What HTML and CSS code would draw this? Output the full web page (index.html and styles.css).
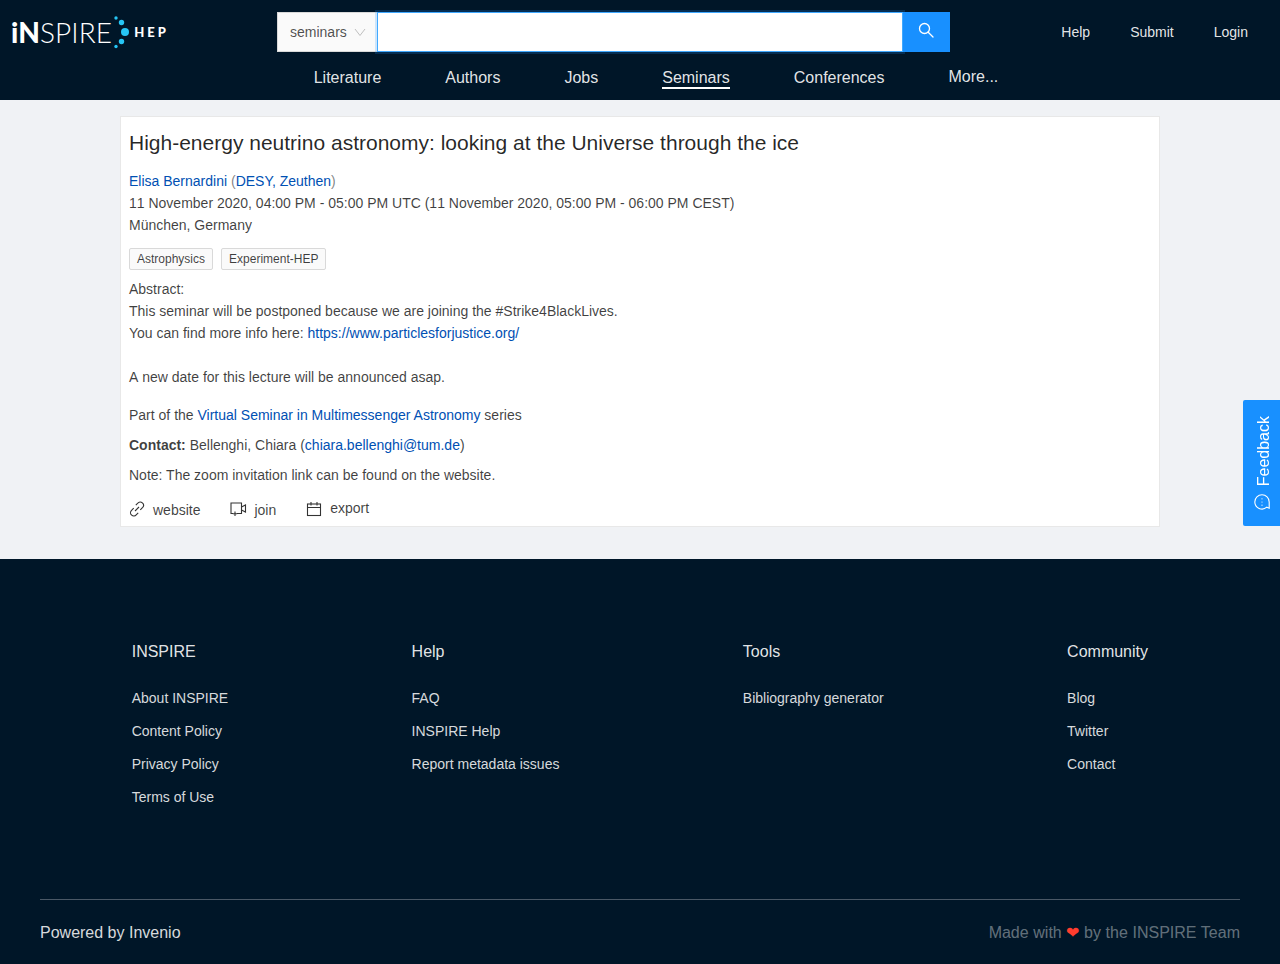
FILE: index.html
```html
<!DOCTYPE html>
<html lang="en">
<head>
    <meta charset="UTF-8">
    <title>High-energy neutrino astronomy - INSPIRE</title>
    <link rel="stylesheet" href="styles.css">
</head>
<body>
    <header class="header">
        <div class="header-top">
            <a class="logo" href="#">
                <span class="logo-name"><b>iN</b>SPIRE</span>
                <svg class="logo-dots" width="20" height="34" viewBox="0 0 20 34">
                    <circle cx="4" cy="3" r="1.700"/>
                    <circle cx="9.500" cy="7.500" r="2.700"/>
                    <circle cx="13" cy="17" r="4"/>
                    <circle cx="9.500" cy="26.500" r="2.700"/>
                    <circle cx="4" cy="31.500" r="1.700"/>
                </svg>
                <span class="logo-hep">HEP</span>
            </a>
            <form class="search">
                <div class="search-scope">
                    <span>seminars</span>
                    <svg width="12" height="12" viewBox="0 0 12 12"><path d="M1 3l5 6.500L11 3" fill="none" stroke="#bfbfbf" stroke-width="1"/></svg>
                </div>
                <div class="search-input"></div>
                <button class="search-btn" type="button">
                    <svg width="16" height="16" viewBox="0 0 16 16" fill="none" stroke="#fff" stroke-width="1.300">
                        <circle cx="6.500" cy="6.500" r="5"/>
                        <path d="M10.200 10.200L15 15" stroke-linecap="round"/>
                    </svg>
                </button>
            </form>
            <nav class="user-links">
                <a href="#">Help</a>
                <a href="#">Submit</a>
                <a href="#">Login</a>
            </nav>
        </div>
        <nav class="main-nav">
            <a href="#">Literature</a>
            <a href="#">Authors</a>
            <a href="#">Jobs</a>
            <a href="#" class="active">Seminars</a>
            <a href="#">Conferences</a>
            <a href="#" class="more">More...</a>
        </nav>
    </header>

    <main class="content">
        <article class="card">
            <h1 class="title">High-energy neutrino astronomy: looking at the Universe through the ice</h1>
            <div class="line"><a href="#">Elisa Bernardini</a> <span class="paren">(</span><a href="#">DESY, Zeuthen</a><span class="paren">)</span></div>
            <div class="line no-kern">11 November 2020, 04:00 PM - 05:00 PM UTC (11 November 2020, 05:00 PM - 06:00 PM CEST)</div>
            <div class="line">München, Germany</div>
            <div class="tags">
                <span class="tag">Astrophysics</span>
                <span class="tag">Experiment-HEP</span>
            </div>
            <div class="line">Abstract:</div>
            <div class="line">This seminar will be postponed because we are joining the #Strike4BlackLives.</div>
            <div class="line">You can find more info here: <a href="#">https://www.particlesforjustice.org/</a></div>
            <div class="line spaced no-kern">A new date for this lecture will be announced asap.</div>
            <div class="line part">Part of the <a href="#">Virtual Seminar in Multimessenger Astronomy</a> series</div>
            <div class="line block"><b>Contact:</b> Bellenghi, Chiara (<a href="#">chiara.bellenghi@tum.de</a>)</div>
            <div class="line block">Note: The zoom invitation link can be found on the website.</div>
            <div class="actions">
                <a class="action" href="#">
                    <svg width="16" height="16" viewBox="0 0 16 16" fill="none" stroke="#333" stroke-width="1.100">
                        <path d="M6.800 4.200l2-2a3.100 3.100 0 0 1 4.900 4.200l-2.400 2.400"/>
                        <path d="M9.200 11.800l-2 2a3.100 3.100 0 0 1-4.900-4.200l2.400-2.400"/>
                        <path d="M6 10l4-4"/>
                    </svg>
                    <span class="low">website</span>
                </a>
                <a class="action join" href="#">
                    <svg width="17" height="16" viewBox="0 0 17 16" fill="none" stroke="#333" stroke-width="1.100">
                        <path d="M3 12.500H1V2h10.500v10.500H7"/>
                        <path d="M11.500 6l4-2v7l-4-2"/>
                        <path d="M5 10.500v4.500M2.800 12.800h4.400"/>
                    </svg>
                    <span class="low">join</span>
                </a>
                <a class="action" href="#">
                    <svg width="16" height="16" viewBox="0 0 16 16" fill="none" stroke="#333" stroke-width="1.100">
                        <rect x="1.500" y="3" width="13" height="11.500"/>
                        <path d="M1.500 6.500h13M5 1v3.500M11 1v3.500"/>
                    </svg>
                    <span class="high">export</span>
                </a>
            </div>
        </article>
    </main>

    <a class="feedback" href="#">
        <svg width="16" height="16" viewBox="0 0 16 16" fill="none" stroke="#fff" stroke-width="1.100">
            <path d="M8 .8a7.200 7.200 0 1 1 0 14.400H1.800l1-2.400A7.200 7.200 0 0 1 8 .8z" transform="rotate(-90 8 8)"/>
            <circle cx="8" cy="4.800" r=".6" fill="#fff" stroke="none"/>
            <circle cx="8" cy="8" r=".6" fill="#fff" stroke="none"/>
            <circle cx="8" cy="11.200" r=".6" fill="#fff" stroke="none"/>
        </svg>
        <span>Feedback</span>
    </a>

    <footer class="footer">
        <div class="footer-cols">
            <div class="footer-col">
                <h4>INSPIRE</h4>
                <a href="#">About INSPIRE</a>
                <a href="#">Content Policy</a>
                <a href="#">Privacy Policy</a>
                <a href="#">Terms of Use</a>
            </div>
            <div class="footer-col">
                <h4>Help</h4>
                <a href="#">FAQ</a>
                <a href="#">INSPIRE Help</a>
                <a href="#">Report metadata issues</a>
            </div>
            <div class="footer-col">
                <h4>Tools</h4>
                <a href="#">Bibliography generator</a>
            </div>
            <div class="footer-col">
                <h4>Community</h4>
                <a href="#">Blog</a>
                <a href="#">Twitter</a>
                <a href="#">Contact</a>
            </div>
        </div>
        <div class="footer-bottom">
            <span class="powered">Powered by Invenio</span>
            <span class="made">Made with <span class="heart">❤</span> by the INSPIRE Team</span>
        </div>
    </footer>
</body>
</html>
```

FILE: styles.css
```css
* {
    box-sizing: border-box;
}

body {
    margin: 0;
    background-color: #f0f2f5;
    font-family: "Liberation Sans", Arial, sans-serif;
    font-size: 14px;
    font-variant: tabular-nums;
    font-feature-settings: "tnum";
    line-height: 22px;
    color: rgba(0, 0, 0, 0.75);
}

a {
    color: #0050b3;
    text-decoration: none;
}

.no-kern {
    font-kerning: none;
}

.header {
    height: 100px;
    background-color: #001628;
    color: #fff;
}

.header-top {
    display: flex;
    align-items: flex-start;
    padding: 12px 32px 0 11px;
}

.logo {
    display: flex;
    align-items: center;
    width: 266px;
    height: 40px;
    color: #fff;
}

.logo-name {
    font-family: Lato, sans-serif;
    font-size: 28px;
    font-weight: 300;
    letter-spacing: 0.1px;
    line-height: 40px;
}

.logo-name b {
    font-weight: 900;
}

.logo-dots {
    fill: #26c6f5;
}

.logo-hep {
    font-family: Lato, sans-serif;
    font-size: 13px;
    font-weight: 900;
    letter-spacing: 3px;
    margin-left: 2px;
}

.search {
    display: flex;
    width: 673px;
    height: 40px;
}

.search-scope {
    display: flex;
    align-items: center;
    justify-content: space-between;
    width: 100px;
    padding: 0 11px 0 12px;
    background-color: #fafafa;
    color: rgba(0, 0, 0, 0.7);
    border: 1px solid #d9d9d9;
    border-right: none;
}

.search-input {
    flex: 1;
    margin-right: -1px;
    background-color: #fff;
    border: 1px solid #40a9ff;
    box-shadow: 0 0 0 2px rgba(24, 144, 255, 0.2);
    z-index: 1;
}

.search-btn {
    display: flex;
    align-items: center;
    justify-content: center;
    width: 48px;
    padding: 0 0 4px;
    background-color: #1890ff;
    border: none;
}

.user-links {
    display: flex;
    gap: 40px;
    margin-left: auto;
    line-height: 40px;
}

.user-links a {
    color: rgba(255, 255, 255, 0.9);
}

.main-nav {
    display: flex;
    gap: 64px;
    padding: 13px 0 0 313.700px;
    font-size: 16px;
}

.main-nav a {
    color: rgba(255, 255, 255, 0.9);
    height: 24px;
    line-height: 26px;
}

.main-nav .active {
    border-bottom: 2px solid #fff;
    height: 24px;
}

.main-nav .more {
    line-height: 20px;
    height: 20px;
    margin-top: 2px;
}

.content {
    padding: 16px 120px 32px;
}

.card {
    height: 411px;
    padding: 8px;
    background-color: #fff;
    border: 1px solid #e8e8e8;
}

.title {
    margin: 0 0 9px;
    font-size: 21px;
    font-weight: 400;
    line-height: 36px;
    color: rgba(0, 0, 0, 0.85);
}

.paren {
    color: rgba(0, 0, 0, 0.5);
}

.tags {
    display: flex;
    gap: 8px;
    margin: 12px 0 8px;
}

.tag {
    height: 22px;
    padding: 0 7px;
    background-color: #fafafa;
    border: 1px solid #d9d9d9;
    border-radius: 2px;
    font-size: 12px;
    line-height: 20px;
}

.spaced {
    margin-top: 22px;
}

.part {
    margin-top: 16px;
}

.block {
    margin-top: 8px;
}

.actions {
    display: flex;
    gap: 30px;
    margin-top: 11px;
}

.action {
    display: flex;
    align-items: center;
    gap: 8px;
    color: rgba(0, 0, 0, 0.75);
}

.action.join {
    gap: 7px;
}

.action svg {
    flex: none;
}

.action .low {
    padding-top: 2px;
}

.action .high {
    margin-top: -2px;
}

.feedback {
    position: fixed;
    right: 0;
    top: 400px;
    display: flex;
    flex-direction: column-reverse;
    justify-content: flex-end;
    align-items: center;
    gap: 8px;
    width: 37px;
    height: 126px;
    padding: 16px 0 0 1px;
    background-color: #1890ff;
    border-radius: 2px 0 0 2px;
    color: #fff;
    font-size: 16px;
}

.feedback span {
    margin-left: 2px;
    writing-mode: vertical-rl;
    transform: rotate(180deg);
    line-height: 37px;
}

.footer {
    height: 405px;
    padding: 74px 40px 0;
    background-color: #001628;
}

.footer-cols {
    display: flex;
    justify-content: space-between;
    height: 266px;
    padding: 0 92px 0 91.700px;
}

.footer-col h4 {
    margin: 0 0 16px;
    font-size: 16px;
    font-weight: 400;
    line-height: 38px;
    color: rgba(255, 255, 255, 0.9);
}

.footer-col a {
    display: block;
    margin-bottom: 11px;
    color: rgba(255, 255, 255, 0.85);
}

.footer-bottom {
    display: flex;
    justify-content: space-between;
    padding-top: 22px;
    border-top: 1px solid #4a5866;
    font-size: 16px;
}

.powered {
    color: rgba(255, 255, 255, 0.85);
}

.made {
    color: rgba(255, 255, 255, 0.4);
    word-spacing: 0.2px;
}

.heart {
    color: #ff3d2e;
}
```
